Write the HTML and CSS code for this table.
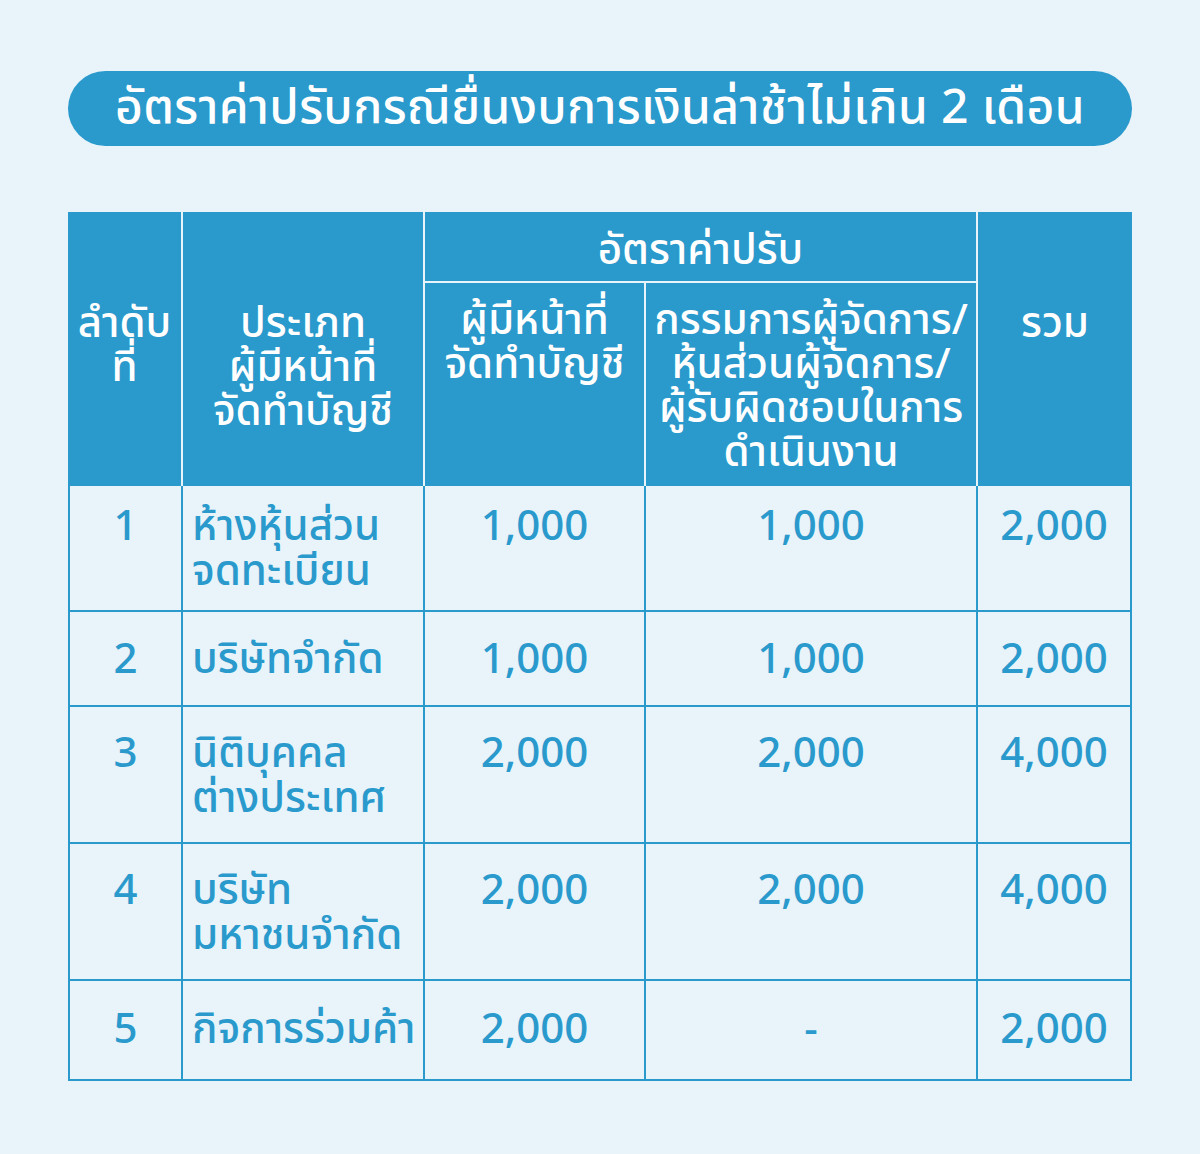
FILE: index.html
```html
<!DOCTYPE html>
<html lang="th">
<head>
<meta charset="utf-8">
<link rel="stylesheet" href="styles.css">
</head>
<body>
<div class="page">
  <h1 class="title">อัตราค่าปรับกรณียื่นงบการเงินล่าช้าไม่เกิน 2 เดือน</h1>
  <table class="fines">
    <colgroup>
      <col class="c1"><col class="c2"><col class="c3"><col class="c4"><col class="c5">
    </colgroup>
    <thead>
      <tr class="h-top">
        <th rowspan="2" class="tall">ลำดับ<br>ที่</th>
        <th rowspan="2" class="tall">ประเภท<br>ผู้มีหน้าที่<br>จัดทำบัญชี</th>
        <th colspan="2" class="group">อัตราค่าปรับ</th>
        <th rowspan="2" class="tall last">รวม</th>
      </tr>
      <tr class="h-sub">
        <th class="sub">ผู้มีหน้าที่<br>จัดทำบัญชี</th>
        <th class="sub">กรรมการผู้จัดการ/<br>หุ้นส่วนผู้จัดการ/<br>ผู้รับผิดชอบในการ<br>ดำเนินงาน</th>
      </tr>
    </thead>
    <tbody>
      <tr class="r1">
        <td class="num">1</td><td class="name">ห้างหุ้นส่วน<br>จดทะเบียน</td><td class="num">1,000</td><td class="num">1,000</td><td class="num">2,000</td>
      </tr>
      <tr class="r2">
        <td class="num">2</td><td class="name">บริษัทจำกัด</td><td class="num">1,000</td><td class="num">1,000</td><td class="num">2,000</td>
      </tr>
      <tr class="r3">
        <td class="num">3</td><td class="name">นิติบุคคล<br>ต่างประเทศ</td><td class="num">2,000</td><td class="num">2,000</td><td class="num">4,000</td>
      </tr>
      <tr class="r3">
        <td class="num">4</td><td class="name">บริษัท<br>มหาชนจำกัด</td><td class="num">2,000</td><td class="num">2,000</td><td class="num">4,000</td>
      </tr>
      <tr class="r5">
        <td class="num">5</td><td class="name">กิจการร่วมค้า</td><td class="num">2,000</td><td class="num">-</td><td class="num">2,000</td>
      </tr>
    </tbody>
  </table>
</div>
</body>
</html>
```

FILE: styles.css
```css
html, body {
  margin: 0;
  padding: 0;
  background: #e8f3fa;
}
body {
  font-family: "Noto Sans Thai", "Noto Sans Thai UI", "Noto Sans", sans-serif;
  color: #2a9acd;
}
.page {
  width: 1200px;
  height: 1154px;
  padding: 71px 68px 0 68px;
  box-sizing: border-box;
}
.title {
  margin: 0;
  height: 75px;
  border-radius: 38px;
  background: #2a99cc;
  color: #ffffff;
  font-size: 48px;
  font-weight: 500;
  line-height: 75px;
  letter-spacing: 0.35px;
  text-align: center;
  white-space: nowrap;
}
.fines {
  margin-top: 66px;
  width: 1064px;
  table-layout: fixed;
  border-collapse: separate;
  border-spacing: 0;
  font-size: 42px;
  font-weight: 500;
}
.c1 { width: 115px; }
.c2 { width: 242px; }
.c3 { width: 221px; }
.c4 { width: 332px; }
.c5 { width: 154px; }

.fines th {
  background: #2a99cc;
  color: #ffffff;
  font-weight: 500;
  line-height: 44px;
  vertical-align: top;
  text-align: center;
  padding: 0;
  white-space: nowrap;
  border-right: 2px solid #e8f3fa;
}
.fines th.last { border-right: none; }
.h-top { height: 71px; }
.fines th.tall { padding-top: 90px; }
.fines th.group {
  border-bottom: 2px solid #e8f3fa;
  vertical-align: middle;
  padding-top: 8px;
}
.fines th.sub {
  padding-top: 16px;
}
.h-sub { height: 203px; }

.fines td {
  border-right: 2px solid #2a99cc;
  border-bottom: 2px solid #2a99cc;
  line-height: 45px;
  padding: 0;
  vertical-align: top;
  white-space: nowrap;
}
.fines td:first-child { border-left: 2px solid #2a99cc; }
.fines td.num { text-align: center; padding-top: 19px; }
.fines td.name { text-align: left; padding-left: 9px; padding-top: 19px; }
.r1 { height: 126px; }
.r2 { height: 95px; }
.r3 { height: 137px; }
.r5 { height: 100px; }
.r2 td.num, .r2 td.name { padding-top: 26px; }
.r3 td.num, .r3 td.name { padding-top: 25px; }
.r5 td.num, .r5 td.name { padding-top: 27px; }
```
